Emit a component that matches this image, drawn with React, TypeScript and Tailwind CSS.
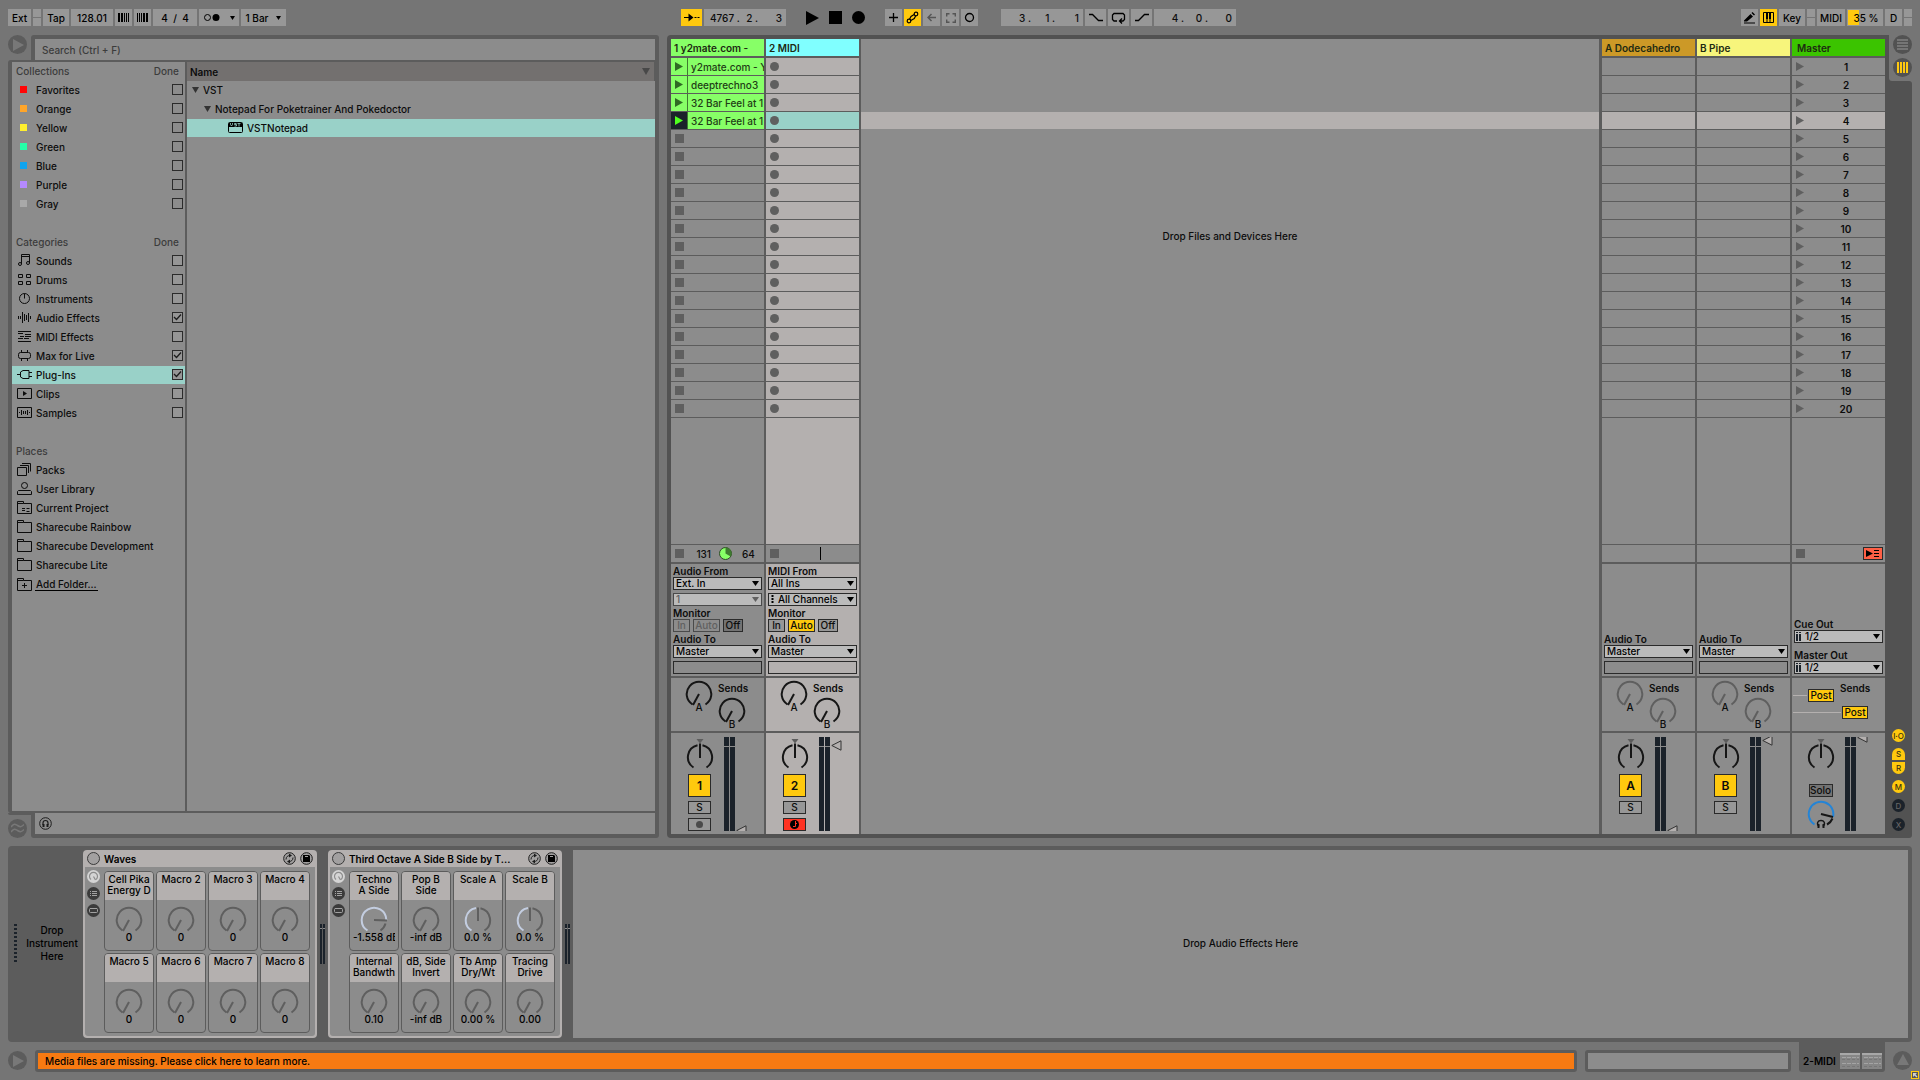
import React, { useState } from 'react';

type Tone = 'dark' | 'dim' | 'macro';

const COLLECTIONS = [
  { name: 'Favorites', swatch: 'bg-[#ff0505]' },
  { name: 'Orange', swatch: 'bg-[#ffa529]' },
  { name: 'Yellow', swatch: 'bg-[#ffef2e]' },
  { name: 'Green', swatch: 'bg-[#26ffa8]' },
  { name: 'Blue', swatch: 'bg-[#10a4ee]' },
  { name: 'Purple', swatch: 'bg-[#b58aff]' },
  { name: 'Gray', swatch: 'bg-[#a9a9a9]' },
];

const CATEGORIES = [
  { name: 'Sounds', icon: 'sounds', checked: false },
  { name: 'Drums', icon: 'drums', checked: false },
  { name: 'Instruments', icon: 'instruments', checked: false },
  { name: 'Audio Effects', icon: 'audio', checked: true },
  { name: 'MIDI Effects', icon: 'midi', checked: false },
  { name: 'Max for Live', icon: 'max', checked: true },
  { name: 'Plug-Ins', icon: 'plug', checked: true },
  { name: 'Clips', icon: 'clips', checked: false },
  { name: 'Samples', icon: 'samples', checked: false },
];

const PLACES = [
  { name: 'Packs', icon: 'packs' },
  { name: 'User Library', icon: 'user' },
  { name: 'Current Project', icon: 'project' },
  { name: 'Sharecube Rainbow', icon: 'folder' },
  { name: 'Sharecube Development', icon: 'folder' },
  { name: 'Sharecube Lite', icon: 'folder' },
];

const CLIPS = ['y2mate.com - Y', 'deeptrechno3', '32 Bar Feel at 1', '32 Bar Feel at 1'];
const SCENES = Array.from({ length: 20 }, (_, i) => i + 1);
const SELECTED_SCENE = 4;

const folder = <path d="M.5 12.5V.5h6v2h8v10z M.5 2.5h6" />;

const ICONS: Record<string, React.ReactNode> = {
  sounds: <><path d="M4.5 10V.5h8V9 M4.5 2.5h8" /><circle cx="3" cy="10" r="1.5" /><circle cx="11" cy="9" r="1.5" /></>,
  drums: <path d="M1.5 1.5h4v3h-4z M9.5 1.5h4v3h-4z M1.5 8.5h4v3h-4z M9.5 8.5h4v3h-4z" />,
  instruments: <><circle cx="7.5" cy="6.5" r="5" /><path d="M7.5 1.5v5" /></>,
  audio: <path d="M1.5 5v3 M3.5 5v3 M5.5 1v11 M7.5 3v7 M9.5 4v5 M11.5 2v9 M13.5 5v3" />,
  midi: <path d="M1 1.5h13 M1 3.5h5 M8 4.5h6 M3 6.5h4 M8 6.5h6 M1 8.5h5 M7 8.5h5 M1 11.5h13" />,
  max: <><rect x="1.5" y="3.5" width="12" height="6" rx="2" /><path d="M4.5 1v2 M10.5 1v2 M4.5 10v2 M10.5 10v2" /></>,
  plug: <path d="M0 6.5h3 M12 2.500H6L3.500 4v5L6 10.500h6z M12 4.5h3 M12 8.5h3" />,
  clips: <><path d="M.5 1.5h14v10H.5z" /><path d="M6 4l4 2.500L6 9z" fill="currentColor" stroke="none" /></>,
  samples: <path d="M.5 1.5h14v10H.5z M2.5 6v1 M4.5 4v5 M6.5 5v3 M8.5 5v3 M10.5 4v5 M12.5 6v1" />,
  packs: <path d="M.5 4.5h9v8h-9z M3 2.5h8.500V10 M5 .5h8.500V8.500" />,
  user: <><circle cx="7.5" cy="3.5" r="3" /><path d="M.5 12.5v-3l1-1h12l1 1v3z" /></>,
  project: <>{folder}<path d="M5 7.5h3 M9.5 7.5h3 M5 9.5h3 M9.5 10.5h3" /></>,
  folder,
  add: <>{folder}<path d="M7.5 5v5 M5 7.5h5" /></>,
};

const Icon = ({ name }: { name: string }) => (
  <svg width="15" height="13" viewBox="0 0 15 13" fill="none" stroke="currentColor" className="shrink-0">
    {ICONS[name]}
  </svg>
);

/* Top bar */

const Ctl = ({ w, active, dim, label, children }: { w: string; active?: boolean; dim?: boolean; label?: string; children?: React.ReactNode }) => (
  <button
    aria-label={label}
    className={`${w} h-[17px] flex items-center justify-center shrink-0 whitespace-pre ${active ? 'bg-[#ffc90e]' : 'bg-[#979797]'} ${dim ? 'text-[#555]' : 'text-black'}`}
  >
    {children}
  </button>
);

const Nudge = () => (
  <div className="w-2 h-[17px] shrink-0 flex flex-col gap-px">
    <div className="flex-1 bg-[#979797]" />
    <div className="flex-1 bg-[#979797]" />
  </div>
);

const Position = ({ values, label }: { values: string[]; label: string }) => (
  <div aria-label={label} className="w-[82px] h-[17px] bg-[#979797] flex items-center justify-end pr-1 shrink-0">
    {values.map((v, i) => (
      <span key={i} className="w-6 text-right whitespace-pre">{v}</span>
    ))}
  </div>
);

const TopBar = () => (
  <header className="flex px-2 h-[17px]">
    <div className="w-[673px] shrink-0 flex gap-[2px]">
      <Ctl w="w-[23px]">Ext</Ctl>
      <Nudge />
      <Ctl w="w-[26px]">Tap</Ctl>
      <Ctl w="w-[42px]">128.01</Ctl>
      <Ctl w="w-[17px]" label="Nudge down">
        <svg width="11" height="9" stroke="black"><path d="M1 0v9 M4 0v9" strokeWidth="2" /><path d="M6.5 0v9 M8.5 0v9 M10.5 0v9" /></svg>
      </Ctl>
      <Ctl w="w-[17px]" label="Nudge up">
        <svg width="11" height="9" stroke="black"><path d="M.5 0v9 M2.5 0v9 M4.5 0v9" /><path d="M7 0v9 M10 0v9" strokeWidth="2" /></svg>
      </Ctl>
      <Ctl w="w-[44px]">4  /  4</Ctl>
      <Ctl w="w-[40px]" label="Metronome">
        <svg width="32" height="9" viewBox="0 0 32 9"><circle cx="4.5" cy="4.5" r="3" fill="none" stroke="black" /><circle cx="13" cy="4.500" r="3.500" /><path d="M27 3h5l-2.500 4z" /></svg>
      </Ctl>
      <Ctl w="w-[45px]">
        <span>1 Bar</span>
        <svg width="5" height="4" className="ml-2"><path d="M0 0h5L2.500 4z" /></svg>
      </Ctl>
    </div>
    <div className="flex shrink-0">
      <div className="flex gap-[2px]">
        <Ctl w="w-[21px]" active label="Follow">
          <svg width="16" height="9" viewBox="0 0 16 9"><path d="M0 4h6v1H0z M4.500 .5l5 4-5 4z M10.500 4h2v1h-2z M13.500 4h2v1h-2z" /></svg>
        </Ctl>
        <Position label="Arrangement position" values={['4767 .', '2 .', '3']} />
      </div>
      <div className="flex items-center gap-[10px] ml-5">
        <button aria-label="Play"><svg width="13" height="14" className="block"><path d="M0 0l13 7-13 7z" /></svg></button>
        <button aria-label="Stop" className="size-[13px] bg-black" />
        <button aria-label="Record" className="size-[13px] rounded-full bg-black" />
      </div>
      <div className="flex gap-[2px] ml-5">
        <Ctl w="w-[17px]" label="Overdub"><svg width="11" height="11" stroke="black"><path d="M5.5 1v9 M1 5.5h9" strokeWidth="1.300" /></svg></Ctl>
        <Ctl w="w-[17px]" active label="Automation arm">
          <svg width="13" height="13" fill="none" stroke="black" strokeWidth="1.200"><circle cx="3" cy="10" r="1.800" /><circle cx="10" cy="3" r="1.800" /><path d="M3.500 8.200L5 5.500l3.200-2 M4.800 9.500l3.500-2 1.400-2.700" /></svg>
        </Ctl>
        <Ctl w="w-[17px]" dim label="Re-enable automation"><svg width="9" height="9" fill="none" stroke="currentColor"><path d="M9 4.500H1 M4.500 1L1 4.500 4.500 8" strokeWidth="1.500" /></svg></Ctl>
        <Ctl w="w-[17px]" dim label="Capture"><svg width="10" height="10" fill="none" stroke="currentColor" strokeWidth="1.400"><path d="M3.500.7H.7v2.800 M6.500.7h2.800v2.800 M3.500 9.300H.7V6.500 M6.500 9.300h2.800V6.500" /></svg></Ctl>
        <Ctl w="w-[17px]" label="Session record"><svg width="11" height="11" fill="none" stroke="black"><circle cx="5.5" cy="5.5" r="4" strokeWidth="1.300" /></svg></Ctl>
      </div>
      <div className="flex gap-[2px] ml-[23px]">
        <Position label="Loop start" values={['3 .', '1 .', '1']} />
        <Ctl w="w-[21px]" label="Punch in"><svg width="14" height="9" fill="none" stroke="black"><path d="M0 1.500h3.500l6 6H14" strokeWidth="1.300" /></svg></Ctl>
        <Ctl w="w-[21px]" label="Loop"><svg width="15" height="12" fill="none" stroke="black"><path d="M6 9H3L1.500 7.500V3L3 1.500h9L13.500 3v4.500L12 9H9 M11 6.500L8.500 9l2.500 2.500" strokeWidth="1.300" /></svg></Ctl>
        <Ctl w="w-[21px]" label="Punch out"><svg width="14" height="9" fill="none" stroke="black"><path d="M0 7.500h3.500l6-6H14" strokeWidth="1.300" /></svg></Ctl>
        <Position label="Loop length" values={['4 .', '0 .', '0']} />
      </div>
    </div>
    <div className="ml-auto flex gap-[2px]">
      <Ctl w="w-[17px]" label="Draw mode"><svg width="13" height="12"><path d="M1 8.500L7.500 2l2.500 2.500L4 9.500H1z M8.500 1l1-1L12 2.500l-1 1z M1 10.500h11v1H1z" /></svg></Ctl>
      <Ctl w="w-[17px]" active label="Computer keyboard"><svg width="11" height="11" fill="none" stroke="black"><path d="M.5.5h10v10H.5z M4 7v4 M7 7v4" /><path d="M4 0v7 M7 0v7" strokeWidth="2" /></svg></Ctl>
      <Ctl w="w-[26px]">Key</Ctl>
      <Nudge />
      <Ctl w="w-[28px]">MIDI</Ctl>
      <div className="relative w-9 h-[17px] bg-[#979797] text-black flex items-center justify-center">
        <div className="absolute left-px top-px bottom-px w-[11px] bg-[#ffc90e]" />
        <span className="relative pl-[2px]">35 %</span>
      </div>
      <Ctl w="w-[17px]">D</Ctl>
      <Nudge />
    </div>
  </header>
);

/* Browser */

const RoundToggle = ({ label, dark, children }: { label: string; dark?: boolean; children: React.ReactNode }) => (
  <button aria-label={label} className={`size-[19px] rounded-full shrink-0 flex items-center justify-center ${dark ? 'bg-[#525252]' : 'bg-[#5c5c5c]'}`}>
    {children}
  </button>
);

const Check = ({ on, name, filled }: { on?: boolean; name: string; filled?: boolean }) => (
  <span className="relative size-[11px] shrink-0">
    <input
      type="checkbox"
      aria-label={name}
      defaultChecked={on}
      className={`peer block appearance-none size-[11px] border border-[#2b2b2b] ${filled ? 'bg-[#969696]' : ''}`}
    />
    <svg width="11" height="11" fill="none" stroke="#1c1c1c" className="absolute inset-0 pointer-events-none opacity-0 peer-checked:opacity-100">
      <path d="M2 5l2.500 2.500L9 2.500" strokeWidth="1.300" />
    </svg>
  </span>
);

const SectionHead = ({ title, done }: { title: string; done?: boolean }) => (
  <div className="h-[19px] pb-[2px] pl-1 pr-[6px] flex items-center justify-between text-[#3c3c3c]">
    <span>{title}</span>
    {done && <button>Done</button>}
  </div>
);

const Browser = () => {
  const [category, setCategory] = useState('Plug-Ins');

  return (
    <section className="w-[651px] shrink-0 flex flex-col">
      <div className="flex">
        <div className="w-[23px] shrink-0">
          <RoundToggle label="Toggle browser">
            <svg width="11" height="12" className="ml-[2px]"><path d="M0 0l11 6-11 6z" fill="#787878" /></svg>
          </RoundToggle>
        </div>
        <div className="flex-1 bg-[#5c5c5c] rounded-t-[3px] px-1 pt-1">
          <input
            aria-label="Search"
            placeholder="Search (Ctrl + F)"
            className="block w-full h-[21px] bg-[#8c8c8c] px-[7px] outline-none placeholder:text-[#3c3c3c]"
          />
        </div>
      </div>

      <div className="flex-1 min-h-0 bg-[#5c5c5c] rounded-l-[3px] px-1 py-[2px] flex gap-[2px]">
        <nav className="w-[173px] shrink-0 bg-[#8c8c8c]">
          <SectionHead title="Collections" done />
          {COLLECTIONS.map((c) => (
            <div key={c.name} className="h-[19px] pb-[2px] pl-2 pr-[2px] flex items-center">
              <span className={`size-[7px] mr-[9px] ${c.swatch}`} />
              <button className="flex-1 text-left">{c.name}</button>
              <Check name={c.name} />
            </div>
          ))}
          <div className="h-[19px]" />
          <SectionHead title="Categories" done />
          {CATEGORIES.map((c) => (
            <div key={c.name} className="h-[19px] pb-px">
              <div className={`h-[18px] pb-px pl-[5px] pr-[2px] flex items-center gap-1 ${category === c.name ? 'bg-[#99d1c8]' : ''}`}>
                <Icon name={c.icon} />
                <button className="flex-1 text-left" onClick={() => setCategory(c.name)}>{c.name}</button>
                <Check name={c.name} on={c.checked} filled />
              </div>
            </div>
          ))}
          <div className="h-[19px]" />
          <SectionHead title="Places" />
          {PLACES.map((p) => (
            <button key={p.name} className="w-full h-[19px] pb-[2px] pl-[5px] flex items-center gap-1">
              <Icon name={p.icon} />
              {p.name}
            </button>
          ))}
          <button className="h-[19px] pl-[5px] flex items-center gap-[3px]">
            <Icon name="add" />
            <span className="border-b border-black px-px">Add Folder...</span>
          </button>
        </nav>

        <div className="flex-1 bg-[#8c8c8c]">
          <div className="h-[19px] bg-[#73706f] pl-[3px] pr-1 flex items-center justify-between border-r border-[#5c5c5c] font-semibold">
            Name
            <svg width="8" height="7"><path d="M0 0h8L4 7z" fill="#484848" /></svg>
          </div>
          <button className="w-full h-[19px] pb-[2px] pl-[5px] flex items-center gap-1">
            <svg width="7" height="6"><path d="M0 0h7L3.500 6z" fill="#333" /></svg>
            VST
          </button>
          <button className="w-full h-[19px] pb-[2px] pl-[17px] flex items-center gap-1">
            <svg width="7" height="6"><path d="M0 0h7L3.500 6z" fill="#333" /></svg>
            Notepad For Poketrainer And Pokedoctor
          </button>
          <button className="w-full h-[18px] pb-px pl-[41px] flex items-center gap-1 bg-[#99d1c8]">
            <svg width="15" height="11" fill="none">
              <rect x=".5" y=".5" width="14" height="10" rx="1" stroke="black" />
              <path d="M1 1h13v4H1z" fill="black" />
              <path d="M2.500 1v1.500L3.500 4l1-1.500V1 M8.500 1.500h-2v1h2V4h-2 M9.500 1.500h3 M11 1.500V4.500" stroke="#99d1c8" strokeWidth="0.800" />
            </svg>
            VSTNotepad
          </button>
        </div>
      </div>

      <div className="flex h-[25px]">
        <div className="w-[23px] shrink-0 pt-[6px] relative">
          <div className="absolute left-0 top-0 w-full h-[2px] bg-[#5c5c5c] rounded-bl-[3px]" />
          <RoundToggle label="Groove pool">
            <svg width="13" height="11" fill="none" stroke="#787878" strokeWidth="1.500"><path d="M0 4c3-4 4-3 6.500-1.500S10 4.500 13 1.500 M0 9c3-4 4-3 6.500-1.500S10 9.500 13 6.500" /></svg>
          </RoundToggle>
        </div>
        <div className="flex-1 bg-[#5c5c5c] rounded-b-[3px] px-1 pb-1">
          <div className="h-[21px] bg-[#8c8c8c] pl-1 flex items-center">
            <button aria-label="Preview">
              <svg width="13" height="13" className="block" fill="none" stroke="#1c1c1c"><circle cx="6.5" cy="6.5" r="5.800" /><path d="M4 8V6a2.500 2.500 0 0 1 5 0v2" strokeWidth="1.200" /><path d="M4.500 7v3 M8.500 7v3" strokeWidth="2" /></svg>
            </button>
          </div>
        </div>
      </div>
    </section>
  );
};

/* Session view */

const KNOB_STROKE: Record<Tone, string> = { dark: '#161616', dim: '#5f5f5f', macro: '#5f5f5f' };

const ARC = 'M7.500 24.500A12.300 12.300 0 1 1 20.500 24.500';

const Knob = ({ tone = 'dark' }: { tone?: Tone }) => (
  <svg width="28" height="28" viewBox="0 0 28 28" fill="none" stroke={KNOB_STROKE[tone]} strokeWidth="2" className="block shrink-0">
    <path d={ARC} />
    <path d="M14 14L8 25" />
  </svg>
);

const PanKnob = () => (
  <svg width="28" height="32" viewBox="0 0 28 32" fill="none" stroke="#161616" strokeWidth="2" className="block">
    <path d="M10.500 0h7L14 4.500z" fill="#5c5c5c" stroke="none" />
    <path d="M7.500 28.500A12.300 12.300 0 0 1 11.500 6.200 M16.500 6.200A12.300 12.300 0 0 1 20.500 28.500 M14 4.500V19" />
  </svg>
);

const Select = ({ value, label, disabled, icon }: { value: string; label: string; disabled?: boolean; icon?: 'midi' | 'stereo' }) => (
  <div className={`relative h-[13px] border flex ${disabled ? 'border-[#4a4a4a] text-[#606060]' : 'border-[#2a2a2a] text-black'} bg-[#bbb]`}>
    {icon === 'midi' && <svg width="3" height="9" className="ml-[2px] mt-px shrink-0"><path d="M1.500 0v9" stroke="black" strokeWidth="2" strokeDasharray="2 1" /></svg>}
    {icon === 'stereo' && <svg width="5" height="9" className="ml-px mt-px shrink-0"><path d="M1 0v1 M4 0v1 M1 2v7 M4 2v7" stroke="#1b222a" strokeWidth="2" /></svg>}
    <select aria-label={label} disabled={disabled} className={`appearance-none w-full h-[11px] leading-[11px] outline-none ${icon ? 'pl-1' : 'pl-[2px]'}`}>
      <option>{value}</option>
    </select>
    <svg width="7" height="5" className="absolute right-[2px] top-[3px] pointer-events-none"><path d="M0 0h7L3.500 5z" fill="currentColor" /></svg>
  </div>
);

const IoLabel = ({ children }: { children: React.ReactNode }) => (
  <div className="h-[13px] leading-[14px] font-semibold whitespace-nowrap">{children}</div>
);

const MonitorButton = ({ w, look, children }: { w: string; look: 'off' | 'pale' | 'pressed' | 'on'; children: React.ReactNode }) => {
  const looks = {
    off: 'bg-[#979797] border-[#2a2a2a]',
    pale: 'bg-[#8c8c8c] border-[#4a4a4a] text-[#606060]',
    pressed: 'bg-[#737373] border-[#2a2a2a]',
    on: 'bg-[#ffc90e] border-[#2a2a2a]',
  };
  return <button className={`${w} h-[13px] border leading-[11px] flex justify-center ${looks[look]}`}>{children}</button>;
};

const Sends = ({ tone }: { tone: Tone }) => (
  <div className="h-[53px] pl-[14px] flex">
    <div className="pt-[2px] flex flex-col items-center">
      <Knob tone={tone} />
      <span className="h-2 leading-[8px] -mt-[5px]">A</span>
    </div>
    <div className="w-[38px] pt-1 pl-[5px] flex flex-col">
      <span className="h-3 leading-[13px] font-semibold">Sends</span>
      <div className="w-7 pt-[3px] flex flex-col items-center">
        <Knob tone={tone} />
        <span className="h-2 leading-[8px] -mt-[5px]">B</span>
      </div>
    </div>
  </div>
);

const Meter = () => (
  <div className="flex gap-px h-full">
    {[0, 1].map((i) => (
      <div key={i} className="w-[5px] bg-[#1b222a] pt-[9px]"><div className="h-px bg-[#8c8c8c]" /></div>
    ))}
  </div>
);

type Handle = 'bottom' | 'high' | 'top' | 'clipped';

/* The view box cuts the handle where it runs past either end of the fader */
const HANDLES: Record<Handle, { height: number; box: string; place: string; fill: string }> = {
  bottom: { height: 6, box: '0 0 11 6', place: 'justify-end', fill: '#b4b0af' },
  high: { height: 11, box: '0 0 11 11', place: 'pt-[3px]', fill: 'none' },
  top: { height: 9, box: '0 2 11 9', place: '', fill: '#b4b0af' },
  clipped: { height: 6, box: '0 5 11 6', place: '', fill: '#b4b0af' },
};

const Fader = ({ handle }: { handle: Handle }) => {
  const h = HANDLES[handle];
  return (
    <div className="flex h-[94px] gap-px">
      <Meter />
      <div className={`flex flex-col ${h.place}`}>
        <svg width="11" height={h.height} viewBox={h.box}>
          <path d="M.8 5.500L10 .8v9.400z" fill={h.fill} stroke="#333" />
        </svg>
      </div>
    </div>
  );
};

const Activator = ({ children }: { children: React.ReactNode }) => (
  <button className="size-[23px] border border-[#2a2a2a] bg-[#ffc90e] text-xs leading-none font-semibold">{children}</button>
);

const SoloButton = () => (
  <button aria-label="Solo" className="w-[23px] h-[13px] mt-1 border border-[#2a2a2a] bg-[#979797] leading-[11px]">S</button>
);

const Strip = ({ handle, children }: { handle: Handle; children: React.ReactNode }) => (
  <div className="h-[101px] pl-[14px] pt-1 flex gap-[10px]">
    <div className="w-[29px] flex flex-col items-center pt-[2px]">
      <PanKnob />
      {children}
    </div>
    <Fader handle={handle} />
  </div>
);

const TrackTitle = ({ color, children }: { color: string; children: React.ReactNode }) => (
  <div className={`h-[17px] mb-[2px] px-[3px] flex items-center font-semibold whitespace-nowrap overflow-hidden text-[#1d2a12] ${color}`}>{children}</div>
);

/* One column of the session grid: title, slots, status row, routing, sends and mixer strip */
const Track = ({ title, color, bg, slots, status, io, sends, strip }: {
  title: string; color: string; bg: string;
  slots: React.ReactNode; status?: React.ReactNode; io: React.ReactNode; sends: React.ReactNode; strip: React.ReactNode;
}) => (
  <div className="w-[93px] shrink-0 flex flex-col">
    <TrackTitle color={color}>{title}</TrackTitle>
    <div className="flex flex-col gap-px">{slots}</div>
    <div className={`flex-1 mt-px ${bg}`} />
    <div className="h-[17px] mt-px mb-[2px] bg-[#8c8c8c] flex items-center">{status}</div>
    <div className={`h-[112px] mb-[2px] px-[2px] pb-[2px] flex flex-col justify-end ${bg}`}>{io}</div>
    <div className={`mb-[2px] ${bg}`}>{sends}</div>
    <div className={bg}>{strip}</div>
  </div>
);

const StopSquare = () => <span className="size-[9px] bg-[#5f5f5f] ml-1 shrink-0" />;

const AudioTrack = () => (
  <Track
    title="1 y2mate.com -"
    color="bg-[#87ff67]"
    bg="bg-[#8c8c8c]"
    slots={SCENES.map((n) => n <= CLIPS.length ? (
      <div key={n} className="h-[17px] flex gap-px bg-[#3f7a30]">
        <button aria-label={`Launch clip ${n}`} className={`w-4 shrink-0 pl-1 flex items-center ${n === SELECTED_SCENE ? 'bg-[#1b222a]' : 'bg-[#87ff67]'}`}>
          <svg width="8" height="9"><path d="M0 0l8 4.500L0 9z" fill={n === SELECTED_SCENE ? '#4fff1f' : '#2f6a24'} /></svg>
        </button>
        <div className="flex-1 bg-[#87ff67] pl-[3px] flex items-center whitespace-nowrap overflow-hidden text-[#1f3d16]">{CLIPS[n - 1]}</div>
      </div>
    ) : (
      <button key={n} aria-label={`Stop slot ${n}`} className="h-[17px] bg-[#8c8c8c] flex items-center"><StopSquare /></button>
    ))}
    status={
      <>
        <StopSquare />
        <span className="w-[27px] text-right">131</span>
        <svg width="13" height="13" viewBox="0 0 13 13" className="ml-2"><circle cx="6.5" cy="6.5" r="6" fill="#87ff67" stroke="#2f4a28" /><path d="M6.500 6.500V.5a6 6 0 0 1 5.200 9z" fill="#3f7a30" /></svg>
        <span className="ml-[10px]">64</span>
      </>
    }
    io={
      <>
        <IoLabel>Audio From</IoLabel>
        <Select label="Audio from" value="Ext. In" />
        <div className="h-[3px]" />
        <Select label="Input channel" value="1" disabled />
        <IoLabel>Monitor</IoLabel>
        <div className="flex gap-[3px]">
          <MonitorButton w="w-[17px]" look="pale">In</MonitorButton>
          <MonitorButton w="w-[27px]" look="pale">Auto</MonitorButton>
          <MonitorButton w="w-[20px]" look="pressed">Off</MonitorButton>
        </div>
        <IoLabel>Audio To</IoLabel>
        <Select label="Audio to" value="Master" />
        <div className="h-[13px] mt-[3px] border border-[#2a2a2a]" />
      </>
    }
    sends={<Sends tone="dark" />}
    strip={
      <Strip handle="bottom">
        <div className="h-[3px]" />
        <Activator>1</Activator>
        <SoloButton />
        <button aria-label="Arm" className="w-[23px] h-[13px] mt-1 border border-[#2a2a2a] bg-[#979797] flex items-center justify-center">
          <span className="size-[7px] rounded-full bg-[#4a4a4a]" />
        </button>
      </Strip>
    }
  />
);

const MidiTrack = () => (
  <Track
    title="2 MIDI"
    color="bg-[#80ffff]"
    bg="bg-[#b4b0af]"
    slots={SCENES.map((n) => (
      <button key={n} aria-label={`Record slot ${n}`} className={`h-[17px] pl-1 flex items-center ${n === SELECTED_SCENE ? 'bg-[#99d1c8]' : 'bg-[#b4b0af]'}`}>
        <span className="size-[9px] rounded-full bg-[#5f5f5f]" />
      </button>
    ))}
    status={
      <>
        <StopSquare />
        <span className="w-px h-[13px] bg-black ml-[41px]" />
      </>
    }
    io={
      <>
        <IoLabel>MIDI From</IoLabel>
        <Select label="MIDI from" value="All Ins" />
        <div className="h-[3px]" />
        <Select label="MIDI channel" value="All Channels" icon="midi" />
        <IoLabel>Monitor</IoLabel>
        <div className="flex gap-[3px]">
          <MonitorButton w="w-[17px]" look="off">In</MonitorButton>
          <MonitorButton w="w-[27px]" look="on">Auto</MonitorButton>
          <MonitorButton w="w-[20px]" look="off">Off</MonitorButton>
        </div>
        <IoLabel>Audio To</IoLabel>
        <Select label="Audio to" value="Master" />
        <div className="h-[13px] mt-[3px] border border-[#2a2a2a]" />
      </>
    }
    sends={<Sends tone="dark" />}
    strip={
      <Strip handle="high">
        <div className="h-[3px]" />
        <Activator>2</Activator>
        <SoloButton />
        <button aria-label="Arm" className="w-[23px] h-[13px] mt-1 border border-[#2a2a2a] bg-[#ff3222] flex items-center justify-center">
          <svg width="9" height="9"><circle cx="4.5" cy="4.5" r="4.5" /><path d="M5.500 1v5.500 M3 6.500h2.500 M5.500 2.500l1.500 1.500" stroke="#ff3222" /></svg>
        </button>
      </Strip>
    }
  />
);

const ReturnTrack = ({ title, letter, color, handle }: { title: string; letter: string; color: string; handle: Handle }) => (
  <Track
    title={title}
    color={color}
    bg="bg-[#8c8c8c]"
    slots={SCENES.map((n) => (
      <div key={n} className={`h-[17px] ${n === SELECTED_SCENE ? 'bg-[#b4b0af]' : 'bg-[#8c8c8c]'}`} />
    ))}
    io={
      <>
        <IoLabel>Audio To</IoLabel>
        <Select label="Audio to" value="Master" />
        <div className="h-[13px] mt-[3px] border border-[#2a2a2a]" />
      </>
    }
    sends={<Sends tone="dim" />}
    strip={
      <Strip handle={handle}>
        <div className="h-[3px]" />
        <Activator>{letter}</Activator>
        <SoloButton />
      </Strip>
    }
  />
);

const MasterTrack = () => (
  <Track
    title="Master"
    color="bg-[#3bc400] indent-[2px]"
    bg="bg-[#8c8c8c]"
    slots={SCENES.map((n) => (
      <button key={n} className={`h-[17px] pl-1 flex items-center ${n === SELECTED_SCENE ? 'bg-[#b4b0af]' : 'bg-[#8c8c8c]'}`}>
        <svg width="8" height="9"><path d="M0 0l8 4.500L0 9z" fill="#5f5f5f" /></svg>
        <span className="flex-1 pl-[3px] text-center font-semibold">{n}</span>
      </button>
    ))}
    status={
      <>
        <StopSquare />
        <button aria-label="Back to arrangement" className="ml-auto mr-[2px] w-5 h-[13px] border border-[#2a2a2a] bg-[#ff5f45] flex items-center justify-center">
          <svg width="14" height="9"><path d="M0 1l7 3.500L0 8z M8 1h5v1H8z M8 4h5v1H8z M8 7h5v1H8z" /></svg>
        </button>
      </>
    }
    io={
      <>
        <IoLabel>Cue Out</IoLabel>
        <Select label="Cue out" value="1/2" icon="stereo" />
        <div className="h-[5px]" />
        <IoLabel>Master Out</IoLabel>
        <Select label="Master out" value="1/2" icon="stereo" />
      </>
    }
    sends={
      <div className="h-[53px] pl-px pt-1 flex flex-col">
        <div className="h-[11px] leading-[13px] pl-[47px] font-semibold">Sends</div>
        <div className="flex items-center gap-px -mt-1">
          <span className="w-[14px] h-px bg-[#b4b0af]" />
          <button className="w-[26px] h-[13px] border border-[#2a2a2a] bg-[#ffc90e] leading-[11px]">Post</button>
        </div>
        <div className="flex items-center gap-px mt-1">
          <span className="w-12 h-px bg-[#b4b0af]" />
          <button className="w-[26px] h-[13px] border border-[#2a2a2a] bg-[#ffc90e] leading-[11px]">Post</button>
        </div>
      </div>
    }
    strip={
      <Strip handle="clipped">
        <button className="w-6 h-[13px] mt-[13px] border border-[#2a2a2a] bg-[#737373] leading-[11px] flex justify-center">Solo</button>
        <svg width="28" height="30" viewBox="0 0 28 30" fill="none" className="mt-[3px] shrink-0">
          <path d="M7.500 24.500A12.300 12.300 0 1 1 26 17" stroke="#2484d6" strokeWidth="2" />
          <path d="M26 17L14 14 M25.500 18.500A12 12 0 0 1 20 24.500" stroke="#161616" strokeWidth="2" />
          <path d="M12 26.500C9 23 11 20.500 14 20.500S19 23 16 26.500" stroke="#161616" strokeWidth="1.400" />
          <path d="M11.500 24v4 M16.500 24v4" stroke="#161616" strokeWidth="2" />
        </svg>
      </Strip>
    }
  />
);

const Session = () => (
  <section className="flex-1 min-w-0 flex">
    <div className="flex-1 min-w-0 bg-[#525252] rounded-l-[4px] pl-1 py-1 flex">
      <div className="flex-1 min-w-0 bg-[#5c5c5c] flex gap-[2px]">
        <AudioTrack />
        <MidiTrack />
        <div className="flex-1 min-w-0 mr-px bg-[#8c8c8c] flex flex-col">
          <div className="h-[17px] mt-[73px] bg-[#b4b0af]" />
          <p className="mt-[101px] text-center">Drop Files and Devices Here</p>
        </div>
        <ReturnTrack title="A Dodecahedro" letter="A" color="bg-[#cc9927]" handle="bottom" />
        <ReturnTrack title="B Pipe" letter="B" color="bg-[#f7f57c]" handle="top" />
        <MasterTrack />
      </div>
    </div>

    <div className="w-[27px] shrink-0 flex flex-col">
      <div className="h-[46px] flex bg-[#525252] rounded-tr-[3px]">
        <div className="w-1" />
        <div className="flex-1 bg-[#757575] pl-1 flex flex-col gap-1 rounded-bl-[3px]">
          <RoundToggle label="Arrangement view" dark><svg width="11" height="11" stroke="#757575" strokeWidth="2"><path d="M0 1h11 M0 4h11 M0 7h11 M0 10h11" /></svg></RoundToggle>
          <RoundToggle label="Session view" dark><svg width="11" height="11" stroke="#ffc90e" strokeWidth="2"><path d="M1 0v11 M4 0v11 M7 0v11 M10 0v11" /></svg></RoundToggle>
        </div>
      </div>
      <div className="flex-1 bg-[#525252] rounded-r-[3px] pb-[7px] flex flex-col justify-end items-center text-[8px] leading-none text-[#3a3210]">
        <button aria-label="Show I/O" className="size-[13px] rounded-full bg-[#ffc90e] mb-[6px] flex items-center justify-center">I·O</button>
        <button aria-label="Show sends" className="w-[13px] h-3 rounded-t-full bg-[#ffc90e] mb-[2px]">S</button>
        <button aria-label="Show returns" className="w-[13px] h-3 rounded-b-full bg-[#ffc90e] mb-[6px]">R</button>
        <button aria-label="Show mixer" className="size-[13px] rounded-full bg-[#ffc90e] mb-[6px]">M</button>
        <button aria-label="Show delays" className="size-[13px] rounded-full bg-[#1b222a] text-[#666] mb-[6px]">D</button>
        <button aria-label="Show crossfader" className="size-[13px] rounded-full bg-[#1b222a] text-[#666]">X</button>
      </div>
    </div>
  </section>
);

/* Device chain */

interface Macro {
  lines: string[];
  value: string;
  knob?: 'full' | 'half';
}

const WAVES: Macro[] = [
  { lines: ['Cell Pika', 'Energy D'], value: '0' },
  { lines: ['Macro 2'], value: '0' },
  { lines: ['Macro 3'], value: '0' },
  { lines: ['Macro 4'], value: '0' },
  { lines: ['Macro 5'], value: '0' },
  { lines: ['Macro 6'], value: '0' },
  { lines: ['Macro 7'], value: '0' },
  { lines: ['Macro 8'], value: '0' },
];

const THIRD_OCTAVE: Macro[] = [
  { lines: ['Techno', 'A Side'], value: '-1.558 dB', knob: 'full' },
  { lines: ['Pop B', 'Side'], value: '-inf dB' },
  { lines: ['Scale A'], value: '0.0 %', knob: 'half' },
  { lines: ['Scale B'], value: '0.0 %', knob: 'half' },
  { lines: ['Internal', 'Bandwth'], value: '0.10' },
  { lines: ['dB, Side', 'Invert'], value: '-inf dB' },
  { lines: ['Tb Amp', 'Dry/Wt'], value: '0.00 %' },
  { lines: ['Tracing', 'Drive'], value: '0.00' },
];

const MacroKnob = ({ knob }: { knob?: 'full' | 'half' }) => {
  if (!knob) return <Knob tone="macro" />;
  return (
    <svg width="28" height="28" viewBox="0 0 28 28" fill="none" strokeWidth="2" stroke="#5f5f5f" className="block">
      {knob === 'full' ? (
        <>
          <path d="M7.500 24.500A12.300 12.300 0 1 1 26.300 14" stroke="#c3cde0" />
          <path d="M14 14l13 .5 M25.500 17.500A12.300 12.300 0 0 1 20.500 24.500" />
        </>
      ) : (
        <>
          <path d="M7.500 24.500A12.300 12.300 0 0 1 12 2" stroke="#c3cde0" />
          <path d="M14 1.500V15 M16.500 2.200A12.300 12.300 0 0 1 20.500 24.500" />
        </>
      )}
    </svg>
  );
};

const Device = ({ title, macros }: { title: string; macros: Macro[] }) => (
  <article className="w-[234px] h-[188px] shrink-0 bg-[#b4b0af] rounded-[4px] px-[2px] pb-[2px] flex flex-col">
    <div className="h-[17px] px-[2px] flex items-center">
      <button aria-label="Device on" className="size-[13px] rounded-full border border-[#3a3a3a] bg-[#a2a0a0]" />
      <h2 className="ml-1 flex-1 font-semibold text-black whitespace-nowrap">{title}</h2>
      <button aria-label="Hot-swap preset">
        <svg width="13" height="13" className="block" fill="none" stroke="#1c1c1c"><circle cx="6.5" cy="6.5" r="5.800" fill="#a2a0a0" /><path d="M3 7.500c0-3 2-4 4-4 M10 5.500c0 3-2 4-4 4" /><path d="M6 1.500l3 2-3 2z M7 7.500l-3 2 3 2z" fill="#1c1c1c" stroke="none" /></svg>
      </button>
      <button aria-label="Save preset" className="ml-1">
        <svg width="13" height="13" className="block"><circle cx="6.5" cy="6.5" r="5.800" fill="#a2a0a0" stroke="#1c1c1c" /><path d="M3 3h6l1 1v6H3z" /><path d="M5 4h3v1H5z" fill="#a2a0a0" /></svg>
      </button>
    </div>
    <div className="flex-1 bg-[#8c8c8c] rounded-b-[3px] pl-[2px] flex">
      <div className="w-[17px] shrink-0 pt-[3px] flex flex-col gap-1">
        <button aria-label="Macros"><svg width="13" height="13" className="block" fill="none" stroke="#8c8c8c"><circle cx="6.5" cy="6.5" r="6.5" fill="#d4d4d4" stroke="none" /><path d="M4 9.500a4 4 0 1 1 5 0 M6.500 6.500l2 3.500" strokeWidth="1.200" /></svg></button>
        <button aria-label="Chain list"><svg width="13" height="13" className="block"><circle cx="6.5" cy="6.5" r="6.5" fill="#3b3b3b" /><path d="M3 4h1v1H3z M5 4h5v1H5z M3 6h1v1H3z M5 6h5v1H5z M3 8h1v1H3z M5 8h5v1H5z" fill="#a2a2a2" /></svg></button>
        <button aria-label="Devices"><svg width="13" height="13" className="block"><circle cx="6.5" cy="6.5" r="6.5" fill="#3b3b3b" /><rect x="2.5" y="4.5" width="8" height="4" rx="1" fill="none" stroke="#a2a2a2" /><path d="M3 4h7v1H3z" fill="#a2a2a2" /></svg></button>
      </div>
      <div className="grid grid-cols-4 gap-[2px] content-start pt-1">
        {macros.map((m, i) => (
          <div key={i} className="w-[50px] h-20 border border-[#5c5c5c] rounded-[4px] overflow-hidden flex flex-col items-center text-black">
            <div className="w-full h-7 shrink-0 bg-[#b4b0af] pt-[2px] leading-[11px] text-center whitespace-nowrap overflow-hidden">
              {m.lines.map((l) => <div key={l}>{l}</div>)}
            </div>
            <div className="pt-[6px]"><MacroKnob knob={m.knob} /></div>
            <div className="w-[42px] h-3 leading-[12px] -mt-[3px] overflow-hidden whitespace-nowrap text-center">{m.value}</div>
          </div>
        ))}
      </div>
    </div>
  </article>
);

const ChainMeter = () => (
  <div className="w-[11px] shrink-0 flex items-center justify-center gap-px">
    {[0, 1].map((i) => (
      <div key={i} className="w-[2px] h-10 bg-[#1b222a] pt-1"><div className="h-px bg-[#8c8c8c]" /></div>
    ))}
  </div>
);

const DeviceChain = () => (
  <section className="bg-[#5c5c5c] rounded-[4px] p-1 flex">
    <div className="w-[71px] shrink-0 flex items-center pl-[2px] pb-px">
      <svg width="3" height="39" className="shrink-0"><path d="M1.500 0v39" stroke="#1b222a" strokeWidth="3" strokeDasharray="2 2" /></svg>
      <p className="flex-1 pl-1 text-center leading-[13px] text-black">Drop<br />Instrument<br />Here</p>
    </div>
    <Device title="Waves" macros={WAVES} />
    <ChainMeter />
    <Device title="Third Octave A Side B Side by T..." macros={THIRD_OCTAVE} />
    <ChainMeter />
    <div className="flex-1 pb-[2px] bg-[#8c8c8c] flex items-center justify-center">Drop Audio Effects Here</div>
  </section>
);

const MiniDevice = () => (
  <svg width="20" height="16" className="shrink-0">
    <rect width="20" height="16" fill="#868686" />
    <path d="M0 1h20" stroke="#a8a8a8" strokeWidth="2" />
    <path d="M2 4.500h17 M2 10.500h17" stroke="#a4a4a4" strokeDasharray="4 1" />
    <path d="M2 6.500h17 M2 13.500h17" stroke="#777" strokeDasharray="3 2" />
  </svg>
);

const StatusBar = () => (
  <footer className="relative h-[38px] flex">
    <div className="w-[27px] pt-[9px]">
      <RoundToggle label="Toggle info view"><svg width="11" height="12" className="ml-[2px]"><path d="M0 0l11 6-11 6z" fill="#787878" /></svg></RoundToggle>
    </div>
    <div className="flex-1 pt-2">
      <button className="w-full h-[22px] border-[3px] border-[#5c5c5c] rounded-[3px] bg-[#f77a12] pl-[7px] flex items-center text-black">
        Media files are missing. Please click here to learn more.
      </button>
    </div>
    <div className="ml-2 mt-2 w-[206px] h-[22px] border-[3px] border-[#5c5c5c] rounded-[3px] bg-[#8c8c8c]" />
    <button className="ml-2 w-[86px] h-[30px] bg-[#5c5c5c] rounded-b-[3px] flex items-center justify-between pl-1 pr-[3px] pt-[8px] font-semibold text-black">
      2-MIDI
      <span className="flex gap-[2px]"><MiniDevice /><MiniDevice /></span>
    </button>
    <div className="ml-2 pt-[9px]">
      <RoundToggle label="Toggle device view"><svg width="12" height="11" className="-mt-[2px]"><path d="M6 0l6 11H0z" fill="#787878" /></svg></RoundToggle>
    </div>
    <svg width="8" height="8" viewBox="0 0 8 8" className="absolute -right-[7px] bottom-px"><path d="M0 0h8v8H0z" fill="#ffc90e" /><path d="M1 1h6v6H1z" fill="#555" /><path d="M2 2h4L4.500 3.500 6.500 5.500l-1 1-2-2L2 6z" fill="#d0d0d0" /></svg>
  </footer>
);

const App: React.FC = () => (
  <div className="min-h-screen bg-[#757575] pt-[9px] flex flex-col text-[10px] leading-[12px] font-medium text-[#0c0c0c] font-['Inter','Liberation_Sans',sans-serif] select-none">
    <TopBar />
    <main className="flex-1 mt-[9px] px-2 flex flex-col">
      <div className="flex-1 flex gap-2">
        <Browser />
        <Session />
      </div>
      <div className="mt-2">
        <DeviceChain />
      </div>
      <StatusBar />
    </main>
  </div>
);

export default App;
